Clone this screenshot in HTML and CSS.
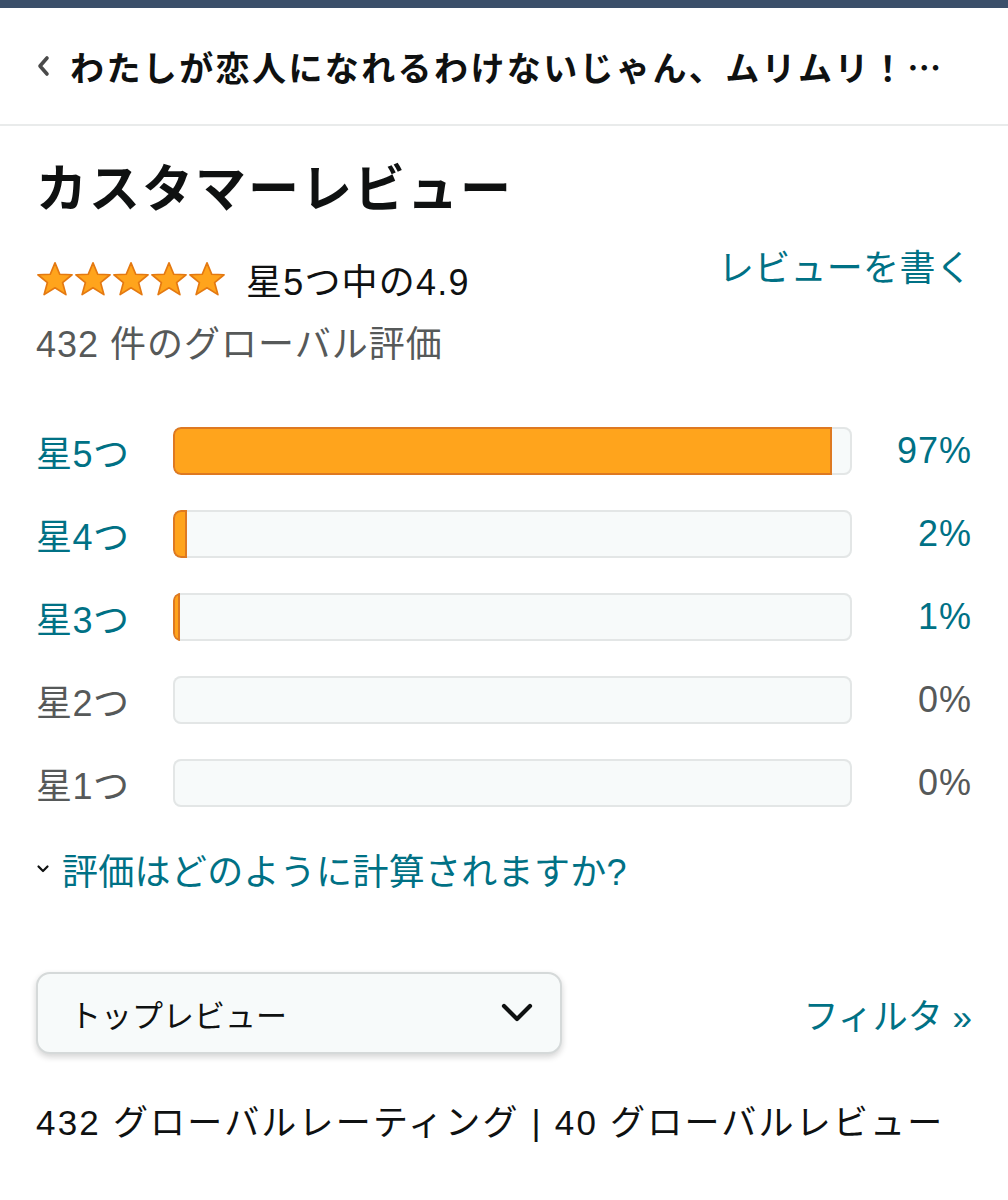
FILE: index.html
```html
<!DOCTYPE html>
<html lang="ja">
<head>
<meta charset="utf-8">
<link rel="stylesheet" href="styles.css">
</head>
<body>
<div class="topbar"></div>
<header class="header">
  <svg class="back" width="14" height="22" viewBox="0 0 14 22"><path d="M11 3 L4 11 L11 19" fill="none" stroke="#4a4a4a" stroke-width="3.6" stroke-linecap="round" stroke-linejoin="round"/></svg>
  <div class="title">わたしが恋人になれるわけないじゃん、ムリムリ！<span class="cjk">…</span></div>
</header>
<main class="content">
  <h1 class="heading">カスタマーレビュー</h1>
  <div class="summary">
    <div class="summary-left">
      <div class="rating-line">
        <div class="stars">
          <svg viewBox="0 0 40 38" class="star"><path d="M20 2 L25 14 L38 14.5 L28 22.8 L31.5 35.5 L20 28.3 L8.5 35.5 L12 22.8 L2 14.5 L15 14 Z" fill="#ffa41c" stroke="#e47911" stroke-width="1.8" stroke-linejoin="round"/></svg>
          <svg viewBox="0 0 40 38" class="star"><path d="M20 2 L25 14 L38 14.5 L28 22.8 L31.5 35.5 L20 28.3 L8.5 35.5 L12 22.8 L2 14.5 L15 14 Z" fill="#ffa41c" stroke="#e47911" stroke-width="1.8" stroke-linejoin="round"/></svg>
          <svg viewBox="0 0 40 38" class="star"><path d="M20 2 L25 14 L38 14.5 L28 22.8 L31.5 35.5 L20 28.3 L8.5 35.5 L12 22.8 L2 14.5 L15 14 Z" fill="#ffa41c" stroke="#e47911" stroke-width="1.8" stroke-linejoin="round"/></svg>
          <svg viewBox="0 0 40 38" class="star"><path d="M20 2 L25 14 L38 14.5 L28 22.8 L31.5 35.5 L20 28.3 L8.5 35.5 L12 22.8 L2 14.5 L15 14 Z" fill="#ffa41c" stroke="#e47911" stroke-width="1.8" stroke-linejoin="round"/></svg>
          <svg viewBox="0 0 40 38" class="star"><path d="M20 2 L25 14 L38 14.5 L28 22.8 L31.5 35.5 L20 28.3 L8.5 35.5 L12 22.8 L2 14.5 L15 14 Z" fill="#ffa41c" stroke="#e47911" stroke-width="1.8" stroke-linejoin="round"/></svg>
        </div>
        <span class="rating-text">星5つ中の4.9</span>
      </div>
      <div class="global-count">432 件のグローバル評価</div>
    </div>
    <a class="link write">レビューを書く</a>
  </div>

  <div class="histogram">
    <div class="hrow link-row"><span class="hlabel">星5つ</span><div class="bar"><div class="fill" style="width:97%"></div></div><span class="hpct">97%</span></div>
    <div class="hrow link-row"><span class="hlabel">星4つ</span><div class="bar"><div class="fill" style="width:2%"></div></div><span class="hpct">2%</span></div>
    <div class="hrow link-row"><span class="hlabel">星3つ</span><div class="bar"><div class="fill" style="width:1%"></div></div><span class="hpct">1%</span></div>
    <div class="hrow"><span class="hlabel">星2つ</span><div class="bar"></div><span class="hpct">0%</span></div>
    <div class="hrow"><span class="hlabel">星1つ</span><div class="bar"></div><span class="hpct">0%</span></div>
  </div>

  <div class="howcalc">
    <svg class="small-chev" width="14" height="10" viewBox="0 0 14 10"><path d="M2.5 2.5 L7 7 L11.5 2.5" fill="none" stroke="#0f1111" stroke-width="2.2" stroke-linecap="round" stroke-linejoin="round"/></svg>
    <span class="link">評価はどのように計算されますか?</span>
  </div>

  <div class="sortbar">
    <div class="select">
      <span>トップレビュー</span>
      <svg width="34" height="22" viewBox="0 0 34 22"><path d="M4 4 L17 17 L30 4" fill="none" stroke="#0f1111" stroke-width="4.2" stroke-linecap="round" stroke-linejoin="round"/></svg>
    </div>
    <a class="link filter">フィルタ »</a>
  </div>

  <div class="totals">432 グローバルレーティング | 40 グローバルレビュー</div>
</main>
</body>
</html>
```

FILE: styles.css
```css
* { box-sizing: border-box; }
html, body { margin: 0; padding: 0; background: #fff; }
body {
  font-family: "Liberation Sans", "Noto Sans CJK JP", sans-serif;
  color: #0f1111;
  width: 1008px;
}
.cjk { font-family: "Noto Sans CJK JP", sans-serif; }
.topbar { height: 8px; background: #3b4f6a; }
.header {
  height: 118px;
  display: flex;
  align-items: center;
  padding: 0 36px;
  border-bottom: 2px solid #e9ebeb;
}
.back { flex: none; margin-right: 20px; }
.title {
  font-size: 34px;
  font-weight: bold;
  white-space: nowrap;
  letter-spacing: 2.4px;
}
.content { padding: 0 36px; }
.heading {
  margin: 32px 0 0;
  font-size: 51px;
  font-weight: bold;
  line-height: 64px;
  letter-spacing: 2px;
}
.summary {
  display: flex;
  justify-content: space-between;
  align-items: flex-start;
  margin-top: 35px;
}
.rating-line { display: flex; align-items: center; height: 44px; }
.stars { display: flex; gap: 0; margin-right: 20px; }
.star { width: 38px; height: 36px; display: block; }
.rating-text { font-size: 36px; letter-spacing: 1.2px; }
.global-count { font-size: 36px; color: #565959; margin-top: 22px; line-height: 44px; letter-spacing: 1px; }
.link { color: #007185; text-decoration: none; }
.write { font-size: 36px; line-height: 44px; margin-top: -10px; letter-spacing: 0.3px; }

.histogram { margin-top: 58px; display: flex; flex-direction: column; gap: 35px; }
.hrow {
  display: grid;
  grid-template-columns: 137px 679px 1fr;
  align-items: center;
  height: 48px;
  color: #565959;
}
.link-row { color: #007185; }
.hlabel { font-size: 36px; letter-spacing: 0.5px; }
.hpct { font-size: 36px; text-align: right; letter-spacing: 1px; }
.bar {
  height: 48px;
  background: #f7fafa;
  box-shadow: inset 0 0 0 2px #e3e6e6;
  border-radius: 8px;
  overflow: hidden;
}
.fill {
  height: 100%;
  background: #ffa41c;
  border: 2px solid #de7921;
  border-radius: 8px 0 0 8px;
}
.howcalc {
  display: flex;
  align-items: center;
  margin-top: 38px;
  font-size: 36px;
}
.howcalc .link { letter-spacing: 0.3px; }
.small-chev { margin-right: 12px; }
.sortbar {
  display: flex;
  justify-content: space-between;
  align-items: center;
  margin-top: 77px;
}
.select {
  width: 526px;
  height: 82px;
  background: #f7fafa;
  border: 2px solid #d5d9d9;
  border-radius: 14px;
  box-shadow: 0 3px 6px rgba(15,17,17,0.18);
  display: flex;
  align-items: center;
  justify-content: space-between;
  padding: 0 26px 0 32px;
  font-size: 31px;
}
.filter { font-size: 35px; }
.totals { font-size: 35px; margin-top: 40px; letter-spacing: 2.2px; }
```
